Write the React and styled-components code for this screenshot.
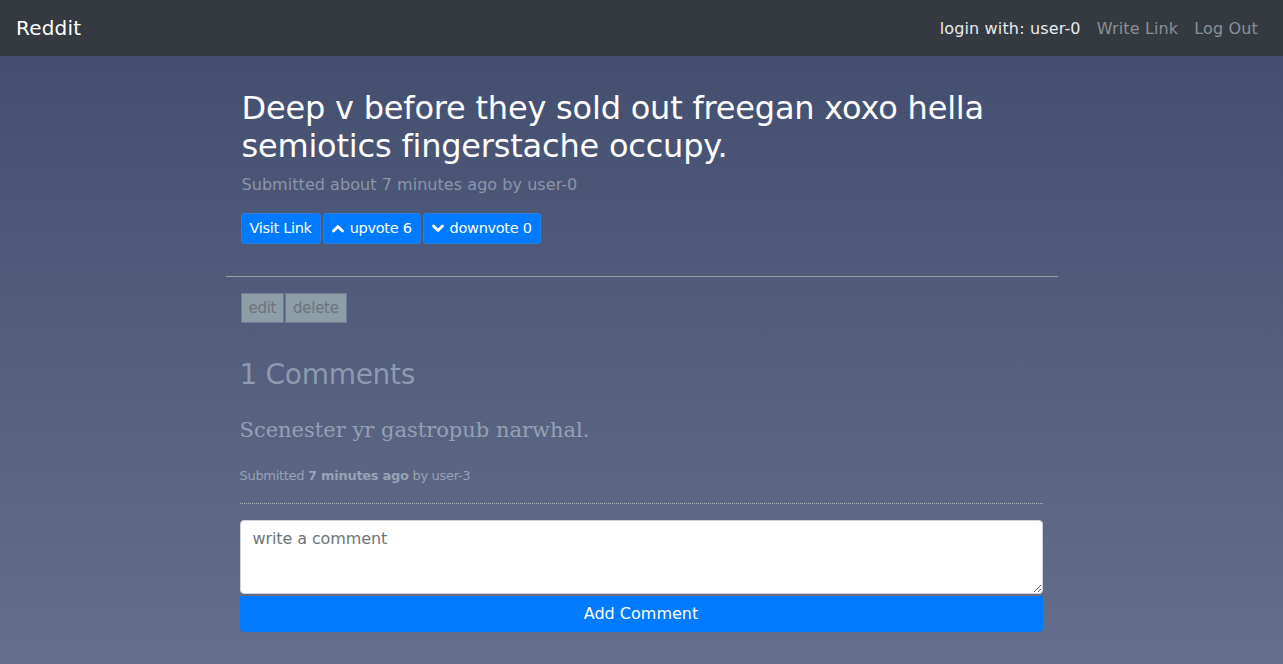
import React from "react";
import styled, { createGlobalStyle } from "styled-components";

const GlobalStyle = createGlobalStyle`
  html, body { margin: 0; padding: 0; }
  body {
    font-family: "DejaVu Sans", "Noto Sans", sans-serif;
    min-height: 664px;
    background: linear-gradient(180deg, #414c6d 0%, #656e8c 100%);
    background-attachment: fixed;
  }
  * { box-sizing: border-box; }
`;

const Page = styled.div`
  min-height: 664px;
  display: flex;
  flex-direction: column;
`;

const NavBar = styled.nav`
  height: 56px;
  background: #343a40;
  display: flex;
  align-items: center;
  justify-content: space-between;
  padding: 0 17px 0 16px;
`;

const Brand = styled.a`
  color: #fff;
  font-size: 20px;
  letter-spacing: 0.2px;
`;

const NavLinks = styled.div`
  display: flex;
  align-items: center;
`;

const NavLink = styled.a`
  font-size: 16px;
  letter-spacing: 0.15px;
  padding: 0 8px;
  color: ${(p) => (p.$active ? "#e9ebee" : "#8b9097")};
`;

const Main = styled.main`
  width: 832px;
  margin: 0 auto;
`;

const PostHeader = styled.section`
  padding: 0 15px 0 16px;
  margin-top: 33px;
`;

const Title = styled.h2`
  margin: 0 0 7px;
  font-weight: 400;
  font-size: 32px;
  line-height: 38.4px;
  color: #fff;
  letter-spacing: -0.2px;
`;

const Meta = styled.p`
  margin: 0;
  font-size: 16px;
  line-height: 24px;
  color: #8b95aa;
  letter-spacing: 0.05px;
`;

const ButtonGroup = styled.div`
  display: flex;
  gap: ${(p) => p.$gap ?? 2}px;
  margin: ${(p) => p.$mt || 0}px 0 0 ${(p) => p.$ml || 0}px;
`;

const PrimaryButton = styled.button`
  font-family: inherit;
  display: inline-flex;
  align-items: center;
  gap: 6px;
  height: 31px;
  padding: 0 8px;
  font-size: 14.5px;
  letter-spacing: -0.3px;
  color: #fff;
  background: #007bff;
  border: 1px solid #2a7fe0;
  border-radius: 3px;
  cursor: pointer;
`;

const MutedButton = styled.button`
  font-family: inherit;
  height: 30px;
  padding: 0 7px;
  font-size: 15px;
  letter-spacing: -0.3px;
  color: #6d747b;
  background: #8e9ea8;
  border: 1px solid #6f7e95;
  border-radius: 0;
`;

const Divider = styled.hr`
  margin: 32px 0 0;
  border: 0;
  border-top: 1px solid #9d9e9f;
`;

const Actions = styled.div`
  padding: 0 15px;
  margin-top: 16px;
`;

const Comments = styled.section`
  padding: 0 15px 0 14px;
`;

const CommentsTitle = styled.h3`
  margin: 35px 0 0;
  font-weight: 400;
  font-size: 28px;
  line-height: 34px;
  letter-spacing: -0.3px;
  color: #8d9ab0;
`;

const CommentBody = styled.p`
  margin: 25px 0 0;
  font-family: "DejaVu Serif", "Liberation Serif", serif;
  font-size: 21px;
  line-height: 26px;
  color: #93a1b4;
`;

const CommentMeta = styled.p`
  margin: 23px 0 0;
  font-size: 13px;
  line-height: 20px;
  letter-spacing: -0.3px;
  color: #97a2b4;
  padding-bottom: 17px;
  border-bottom: 1px dotted #a9afbd;
  b { font-weight: 700; }
`;

const CommentForm = styled.form`
  margin-top: 16px;
  display: flex;
  flex-direction: column;
  gap: 2px;
`;

const TextArea = styled.textarea`
  font-family: inherit;
  height: 74px;
  width: 100%;
  padding: 8px 12px;
  font-size: 16px;
  letter-spacing: -0.1px;
  color: #495057;
  background: #fff;
  border: 1px solid #ced4da;
  border-radius: 4px;
  resize: vertical;
  &::placeholder { color: #6c757d; }
`;

const SubmitButton = styled.button`
  font-family: inherit;
  height: 36px;
  width: 100%;
  font-size: 16px;
  letter-spacing: 0;
  color: #fff;
  background: #007bff;
  border: 1px solid #007bff;
  border-radius: 0 0 4px 4px;
`;

const Chevron = ({ down }) => (
  <svg width="12" height="9" viewBox="0 0 12 9" aria-hidden="true">
    <polyline
      points={down ? "1.5,2 6,6.5 10.5,2" : "1.5,7 6,2.5 10.5,7"}
      fill="none"
      stroke="#fff"
      strokeWidth="2.8"
      strokeLinecap="round"
      strokeLinejoin="round"
    />
  </svg>
);

export default function App() {
  return (
    <Page>
      <GlobalStyle />
      <NavBar>
        <Brand>Reddit</Brand>
        <NavLinks>
          <NavLink $active>login with: user-0</NavLink>
          <NavLink>Write Link</NavLink>
          <NavLink>Log Out</NavLink>
        </NavLinks>
      </NavBar>
      <Main>
        <PostHeader>
          <Title>Deep v before they sold out freegan xoxo hella semiotics fingerstache occupy.</Title>
          <Meta>Submitted about 7 minutes ago by user-0</Meta>
          <ButtonGroup $mt={16} $ml={-1}>
            <PrimaryButton>Visit Link</PrimaryButton>
            <PrimaryButton><Chevron />upvote 6</PrimaryButton>
            <PrimaryButton><Chevron down />downvote 0</PrimaryButton>
          </ButtonGroup>
        </PostHeader>
        <Divider />
        <Actions>
          <ButtonGroup $gap={1}>
            <MutedButton>edit</MutedButton>
            <MutedButton>delete</MutedButton>
          </ButtonGroup>
        </Actions>
        <Comments>
          <CommentsTitle>1 Comments</CommentsTitle>
          <CommentBody>Scenester yr gastropub narwhal.</CommentBody>
          <CommentMeta>Submitted <b>7 minutes ago</b> by user-3</CommentMeta>
          <CommentForm onSubmit={(e) => e.preventDefault()}>
            <TextArea placeholder="write a comment" />
            <SubmitButton type="submit">Add Comment</SubmitButton>
          </CommentForm>
        </Comments>
      </Main>
    </Page>
  );
}
